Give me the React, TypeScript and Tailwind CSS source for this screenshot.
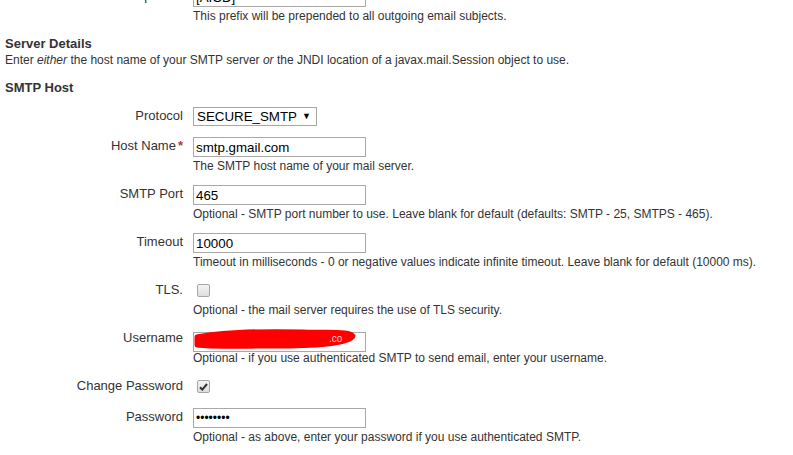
import React from 'react';

function Field({ label, required, children }: { label: string; required?: boolean; children: React.ReactNode }) {
  return (
    <div className="flex gap-[10px] mb-[12px]">
      <div className="w-[183px] shrink-0 text-right text-[13px] leading-[16px] pt-[1px]">
        {label}
        {required && <span className="text-[#b03a3a] font-bold ml-[2px]">*</span>}
      </div>
      <div className="flex flex-col">{children}</div>
    </div>
  );
}

function TextBox({ value, type = 'text', small }: { value: string; type?: string; small?: boolean }) {
  return (
    <input
      type={type}
      readOnly
      value={value}
      className={
        small
          ? "w-[173px] h-[20px] border border-[#a9a9a9] bg-white px-[2px] text-[12px] text-black outline-none font-['Liberation_Sans',Arial,sans-serif]"
          : "w-[173px] h-[20px] border border-[#a9a9a9] bg-white px-[2px] text-[13.33px] text-black outline-none font-['Liberation_Sans',Arial,sans-serif]"
      }
    />
  );
}

function Help({ children }: { children: React.ReactNode }) {
  return <div className="text-[12px] leading-[16px] pt-[1px] -mb-[1px] whitespace-nowrap">{children}</div>;
}

function Checkbox({ checked }: { checked?: boolean }) {
  return (
    <span className="mt-[3px] mb-[3px] ml-[4px] w-[13px] h-[13px] rounded-[2px] border border-[#a6a6a6] bg-gradient-to-b from-[#f4f4f4] to-[#dedede] flex items-center justify-center">
      {checked && (
        <svg width="9" height="8" viewBox="0 0 9 8">
          <path d="M1 4.2 L3.3 6.6 L8 1" fill="none" stroke="#333" strokeWidth="2" />
        </svg>
      )}
    </span>
  );
}

export default function App() {
  return (
    <div className="w-[793px] h-[455px] overflow-hidden bg-white text-[#333] font-['Liberation_Sans',Arial,sans-serif]">
      {/* page is scrolled: the first row is partly above the top edge */}
      <div className="-mt-[13px]">
        <Field label="Email prefix" required>
          <TextBox value="[AICD]" />
          <Help>This prefix will be prepended to all outgoing email subjects.</Help>
        </Field>
      </div>

      <div className="px-[5px]">
        <div className="font-bold text-[13px] leading-[17px]">Server Details</div>
        <div className="text-[12px] leading-[16px]">
          Enter <i>either</i> the host name of your SMTP server <i>or</i> the JNDI location of a javax.mail.Session object to use.
        </div>
        <div className="font-bold text-[13px] leading-[16px] mt-[12px] mb-[11px]">SMTP Host</div>
      </div>

      <div className="flex gap-[10px] mb-[11px]">
        <div className="w-[183px] shrink-0 text-right text-[13px] leading-[16px] pt-[1px]">Protocol</div>
        <div className="w-[124px] h-[19px] border border-[#a6a6a6] bg-white flex items-center justify-between px-[3px] text-[13.33px] text-black">
          <span>SECURE_SMTP</span>
          <span className="text-[9px] mr-[2px]">▼</span>
        </div>
      </div>

      <Field label="Host Name" required>
        <TextBox value="smtp.gmail.com" />
        <Help>The SMTP host name of your mail server.</Help>
      </Field>

      <Field label="SMTP Port">
        <TextBox value="465" />
        <Help>Optional - SMTP port number to use. Leave blank for default (defaults: SMTP - 25, SMTPS - 465).</Help>
      </Field>

      <Field label="Timeout">
        <TextBox value="10000" />
        <Help>Timeout in milliseconds - 0 or negative values indicate infinite timeout. Leave blank for default (10000 ms).</Help>
      </Field>

      <Field label="TLS.">
        <Checkbox />
        <div className="mt-[1px]">
          <Help>Optional - the mail server requires the use of TLS security.</Help>
        </div>
      </Field>

      <Field label="Username">
        <div className="relative w-[173px] h-[20px]">
          <TextBox value="" />
          <svg className="absolute left-0 top-0" width="173" height="20" viewBox="0 0 173 20">
            <path
              d="M4 8 C 30 3, 70 2, 110 3 C 140 4, 157 2, 160 7 C 158 15, 120 17, 80 17 C 50 17, 20 18, 4 16 Z"
              fill="#ff0000"
              stroke="#ff0000"
              strokeWidth="5"
              strokeLinejoin="round"
            />
            <text x="136" y="13" fontSize="10" fill="#f7d0d0" fontFamily="Liberation Sans, Arial, sans-serif">.co</text>
          </svg>
        </div>
        <Help>Optional - if you use authenticated SMTP to send email, enter your username.</Help>
      </Field>

      <Field label="Change Password">
        <Checkbox checked />
      </Field>

      <Field label="Password">
        <TextBox type="password" value="12345678" small />
        <Help>Optional - as above, enter your password if you use authenticated SMTP.</Help>
      </Field>
    </div>
  );
}
